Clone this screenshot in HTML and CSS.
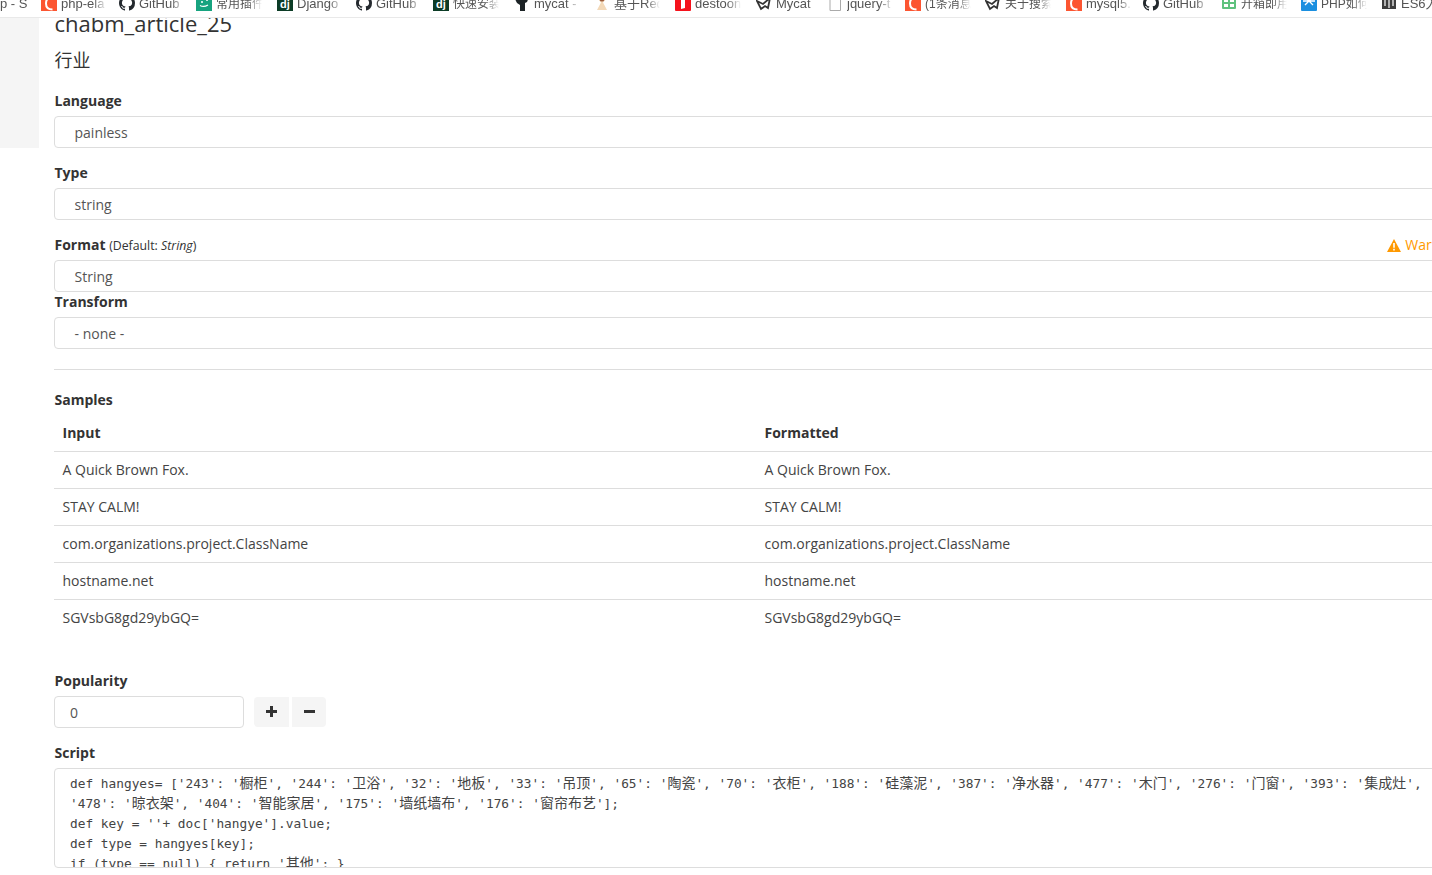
FILE: index.html
```html
<!DOCTYPE html>
<html lang="zh">
<head>
<meta charset="utf-8">
<title>chabm_article_25</title>
<link rel="stylesheet" href="styles.css">
</head>
<body>
<svg class="defs" width="0" height="0" aria-hidden="true">
  <symbol id="i-c" viewBox="0 0 16 16"><rect width="16" height="16" fill="#fc5531"/><path d="M11.500 1.500C7.500 2 5 4.800 5 8.500s2.500 6 6.500 6" fill="none" stroke="#fff" stroke-width="2"/></symbol>
  <symbol id="i-gh" viewBox="0 0 16 16"><path fill="#24292e" d="M8 0C3.580 0 0 3.580 0 8c0 3.540 2.290 6.530 5.470 7.590.4.070.55-.17.55-.38 0-.19-.01-.82-.01-1.490-2.010.37-2.530-.49-2.690-.94-.09-.23-.48-.94-.82-1.130-.28-.15-.68-.52-.01-.53.63-.01 1.080.58 1.230.82.72 1.210 1.870.87 2.330.66.07-.52.28-.87.51-1.070-1.780-.2-3.640-.89-3.640-3.950 0-.87.31-1.590.82-2.150-.08-.2-.36-1.020.08-2.120 0 0 .67-.21 2.200.82.64-.18 1.320-.27 2-.27s1.360.09 2 .27c1.530-1.040 2.200-.82 2.200-.82.44 1.100.16 1.920.08 2.120.51.56.82 1.270.82 2.150 0 3.070-1.870 3.750-3.650 3.950.29.25.54.73.54 1.480 0 1.070-.01 1.930-.01 2.200 0 .21.15.46.55.38A8.013 8.013 0 0016 8c0-4.420-3.580-8-8-8z"/></symbol>
  <symbol id="i-teal" viewBox="0 0 16 16"><rect width="16" height="16" fill="#17a37f"/><circle cx="6" cy="7" r="1" fill="#fff"/><circle cx="11" cy="5" r="1" fill="#fff"/><path d="M4 10.500c2.500 1.500 5.500 1 8-.5" fill="none" stroke="#fff" stroke-width="1.300"/></symbol>
  <symbol id="i-cat" viewBox="0 0 16 16"><path fill="#1c2326" d="M1 4l4 1 1-3 4 1 5-1-2 5-2 1v8H6v-6L3 8z"/></symbol>
  <symbol id="i-red" viewBox="0 0 16 16"><path fill="#f3d9b8" d="M4 4h8l-3 3.500L13 15H3l4-7.500z"/><circle cx="8" cy="4" r="2.500" fill="#9a5b3c"/></symbol>
  <symbol id="i-des" viewBox="0 0 16 16"><rect width="16" height="16" rx="1" fill="#f5121c"/><path d="M6 2h4v11l-4 1z" fill="#fff"/></symbol>
  <symbol id="i-my" viewBox="0 0 16 16"><path d="M1 6l6 3 7-6-2 10-3-2-4 3z" fill="none" stroke="#333" stroke-width="1.800"/></symbol>
  <symbol id="i-doc" viewBox="0 0 16 16"><path d="M3 .5h7l3.500 3.500v11.500H3z" fill="#fff" stroke="#aaa"/></symbol>
  <symbol id="i-sheet" viewBox="0 0 16 16"><rect x="1" y="0" width="14" height="14" rx="1" fill="#5fc27e"/><path d="M3 3h4v4H3zM9 3h4v4H9zM3 9h4v3H3zM9 9h4v3H9z" fill="#fff"/></symbol>
  <symbol id="i-php" viewBox="0 0 16 16"><rect width="16" height="16" rx="1" fill="#1a8fe0"/><path d="M4 2l4 4 4-4M4 10l4-4 4 4M2 6h12" fill="none" stroke="#fff" stroke-width="1.300"/></symbol>
  <symbol id="i-book" viewBox="0 0 16 16"><path fill="#3d3d3d" d="M1 1l5 1 2 1 2-1 5-1v13H1z"/><path d="M8 3v10M4 4v7M12 4v7" stroke="#fff" stroke-width="1.200"/></symbol>
</svg>

<nav class="bookmarks">
  <div class="bm-row">
    <a class="bm"><span class="bm-text">p - S</span></a>
    <a class="bm"><svg class="bm-icon"><use href="#i-c"/></svg><span class="bm-text">php-ela</span></a>
    <a class="bm"><svg class="bm-icon"><use href="#i-gh"/></svg><span class="bm-text">GitHub</span></a>
    <a class="bm"><svg class="bm-icon"><use href="#i-teal"/></svg><span class="bm-text bm-cjk">常用插件</span></a>
    <a class="bm"><span class="bm-dj">dj</span><span class="bm-text">Django</span></a>
    <a class="bm"><svg class="bm-icon"><use href="#i-gh"/></svg><span class="bm-text">GitHub</span></a>
    <a class="bm"><span class="bm-dj">dj</span><span class="bm-text bm-cjk">快速安装</span></a>
    <a class="bm"><svg class="bm-icon"><use href="#i-cat"/></svg><span class="bm-text">mycat -</span></a>
    <a class="bm"><svg class="bm-icon"><use href="#i-red"/></svg><span class="bm-text">基于Redis</span></a>
    <a class="bm"><svg class="bm-icon"><use href="#i-des"/></svg><span class="bm-text">destoon</span></a>
    <a class="bm"><svg class="bm-icon"><use href="#i-my"/></svg><span class="bm-text">Mycat</span></a>
    <a class="bm"><svg class="bm-icon"><use href="#i-doc"/></svg><span class="bm-text">jquery-t</span></a>
    <a class="bm"><svg class="bm-icon"><use href="#i-c"/></svg><span class="bm-text bm-cjk">(1条消息</span></a>
    <a class="bm"><svg class="bm-icon"><use href="#i-my"/></svg><span class="bm-text bm-cjk">关于搜索</span></a>
    <a class="bm"><svg class="bm-icon"><use href="#i-c"/></svg><span class="bm-text">mysql5.</span></a>
    <a class="bm"><svg class="bm-icon"><use href="#i-gh"/></svg><span class="bm-text">GitHub</span></a>
    <a class="bm"><svg class="bm-icon"><use href="#i-sheet"/></svg><span class="bm-text bm-cjk">开箱即用</span></a>
    <a class="bm"><svg class="bm-icon"><use href="#i-php"/></svg><span class="bm-text bm-cjk">PHP如何</span></a>
    <a class="bm"><svg class="bm-icon"><use href="#i-book"/></svg><span class="bm-text">ES6入门</span></a>
  </div>
</nav>

<div class="page">
  <aside class="side"></aside>
  <main class="form">
    <h1 class="title">chabm_article_25</h1>
    <h2 class="subtitle">行业</h2>

    <div class="group">
      <label class="label">Language</label>
      <div class="control">painless</div>
    </div>
    <div class="group">
      <label class="label">Type</label>
      <div class="control">string</div>
    </div>
    <div class="group group-tight">
      <div class="label-row">
        <label class="label">Format <small class="hint">(Default: <em>String</em>)</small></label>
        <span class="warn"><svg class="warn-icon" viewBox="0 0 14 13"><path d="M7 0l7 13H0z" fill="#f90"/><path d="M6.200 4h1.600v4.800H6.200zM6.200 9.800h1.600v1.600H6.200z" fill="#fff"/></svg>Warning</span>
      </div>
      <div class="control">String</div>
    </div>
    <div class="group">
      <label class="label">Transform</label>
      <div class="control">- none -</div>
    </div>

    <hr class="rule">

    <section class="samples">
      <label class="label">Samples</label>
      <table class="table">
        <thead><tr><th>Input</th><th>Formatted</th></tr></thead>
        <tbody>
          <tr><td>A Quick Brown Fox.</td><td>A Quick Brown Fox.</td></tr>
          <tr><td>STAY CALM!</td><td>STAY CALM!</td></tr>
          <tr><td>com.organizations.project.ClassName</td><td>com.organizations.project.ClassName</td></tr>
          <tr><td>hostname.net</td><td>hostname.net</td></tr>
          <tr><td>SGVsbG8gd29ybGQ=</td><td>SGVsbG8gd29ybGQ=</td></tr>
        </tbody>
      </table>
    </section>

    <div class="group">
      <label class="label">Popularity</label>
      <div class="pop-row">
        <div class="pop-input">0</div>
        <div class="pop-btns">
          <button class="pop-btn" type="button" aria-label="plus"><svg width="11" height="11" viewBox="0 0 11 11"><path d="M4 0h3v4h4v3H7v4H4V7H0V4h4z" fill="#333"/></svg></button>
          <button class="pop-btn" type="button" aria-label="minus"><svg width="11" height="3" viewBox="0 0 11 3"><rect width="11" height="3" fill="#333"/></svg></button>
        </div>
      </div>
    </div>

    <div class="group group-last">
      <label class="label">Script</label>
      <div class="code"><pre class="code-text">def hangyes= ['243': '<span class="zh">橱柜</span>', '244': '<span class="zh">卫浴</span>', '32': '<span class="zh">地板</span>', '33': '<span class="zh">吊顶</span>', '65': '<span class="zh">陶瓷</span>', '70': '<span class="zh">衣柜</span>', '188': '<span class="zh">硅藻泥</span>', '387': '<span class="zh">净水器</span>', '477': '<span class="zh">木门</span>', '276': '<span class="zh">门窗</span>', '393': '<span class="zh">集成灶</span>',
'478': '<span class="zh">晾衣架</span>', '404': '<span class="zh">智能家居</span>', '175': '<span class="zh">墙纸墙布</span>', '176': '<span class="zh">窗帘布艺</span>'];
def key = ''+ doc['hangye'].value;
def type = hangyes[key];
if (type == null) { return '<span class="zh">其他</span>'; }</pre></div>
    </div>
  </main>
</div>
</body>
</html>
```

FILE: styles.css
```css
* { box-sizing: border-box; }

html, body {
  margin: 0;
  height: 875px;
  overflow: hidden;
  background: #fff;
}

body {
  font-family: "Open Sans", "Noto Sans CJK SC", sans-serif;
  font-size: 14px;
  line-height: 20px;
  color: #444;
}

.defs { display: block; height: 0; }

/* Bookmarks bar */
.bookmarks {
  position: relative;
  z-index: 2;
  height: 18px;
  overflow: hidden;
  background: #fff;
  border-bottom: 1px solid #e9e9e9;
}

.bm-row {
  display: grid;
  grid-template-columns: 41px 78px 77px 81px 79px 77px 81px 80px 81px 81px 71px 78px 80px 81px 77px 78px 80px 80px 80px;
  margin-top: -5px;
  width: 1500px;
}

.bm {
  display: flex;
  align-items: center;
  gap: 4px;
  height: 16px;
  overflow: hidden;
  font-family: "Liberation Sans", "Noto Sans CJK SC", sans-serif;
  font-size: 13px;
  color: #555;
}

.bm-icon { width: 16px; height: 16px; flex: none; }

.bm-dj {
  flex: none;
  width: 16px;
  height: 16px;
  padding-top: 3px;
  background: #0c3c26;
  color: #fff;
  font-size: 11px;
  font-weight: 700;
  line-height: 13px;
  text-align: center;
}

.bm-text {
  display: block;
  width: 46px;
  flex: none;
  margin-top: 1px;
  overflow: hidden;
  white-space: nowrap;
  -webkit-mask-image: linear-gradient(to right, #000 70%, transparent);
  mask-image: linear-gradient(to right, #000 70%, transparent);
}

.bm-cjk { font-size: 12px; }

/* Page */
.page { display: flex; align-items: flex-start; }

.side {
  flex: none;
  width: 39px;
  height: 130px;
  background: #f5f5f5;
}

.form {
  flex: none;
  width: 1404px;
  margin-left: 15px;
}

.title {
  margin: -7px 0 0;
  padding-left: 0.5px;
  font-size: 22px;
  line-height: 24px;
  font-weight: 400;
  color: #333;
}

.subtitle {
  margin: 13px 0 19px;
  padding-left: 0.5px;
  font-size: 18px;
  line-height: 24px;
  font-weight: 400;
  color: #333;
}

.group { margin-bottom: 15px; }
.group-tight { margin-bottom: 0; }
.group-last { margin-bottom: 0; }

.label {
  display: block;
  margin-bottom: 5px;
  padding-left: 0.5px;
  font-weight: 700;
  color: #333;
}

.label-row {
  display: flex;
  justify-content: space-between;
  align-items: flex-start;
  height: 25px;
}

.hint {
  font-size: 12.3px;
  line-height: 1;
  font-weight: 400;
}

.warn {
  display: flex;
  align-items: center;
  gap: 4px;
  height: 20px;
  margin-right: -2px;
  color: #f90;
  white-space: nowrap;
}

.warn-icon { width: 14px; height: 13px; }

.control {
  height: 32px;
  padding: 6px 19.5px 5px;
  border: 1px solid #ddd;
  border-radius: 4px;
  color: #555;
}

.rule {
  height: 1px;
  margin: 20px 0;
  border: 0;
  background: #ddd;
}

/* Samples */
.samples { margin-bottom: 34px; }

.table {
  width: 100%;
  table-layout: fixed;
  border-collapse: collapse;
}

.table th,
.table td {
  height: 37px;
  padding: 8px 8px 8px 8.5px;
  text-align: left;
  border-bottom: 1px solid #ddd;
  font-weight: 400;
}

.table th {
  height: 36px;
  font-weight: 700;
  color: #333;
}

.table tbody tr:last-child td { border-bottom: 0; }

/* Popularity */
.pop-row { display: flex; align-items: flex-start; gap: 10px; }

.pop-input {
  width: 190px;
  height: 32px;
  padding: 6px 15px 5px;
  border: 1px solid #ddd;
  border-radius: 4px;
  color: #555;
}

.pop-btns { display: flex; gap: 3px; margin-top: 1px; }

.pop-btn {
  display: flex;
  align-items: center;
  justify-content: center;
  width: 35px;
  height: 30px;
  padding: 0;
  border: 0;
  background: #f5f5f5;
  border-radius: 4px 0 0 4px;
}

.pop-btn + .pop-btn {
  width: 34px;
  border-radius: 0 4px 4px 0;
}

/* Script */
.code {
  height: 100px;
  padding: 5px 15px 0;
  overflow: hidden;
  border: 1px solid #ddd;
  border-radius: 4px;
}

.code-text {
  margin: 0;
  font-family: "DejaVu Sans Mono", "Noto Sans CJK SC", monospace;
  font-size: 12.8px;
  line-height: 20px;
  color: #444;
  white-space: pre;
}

.zh {
  font-family: "Noto Sans CJK SC", sans-serif;
  font-size: 14px;
  line-height: 0;
}
```
